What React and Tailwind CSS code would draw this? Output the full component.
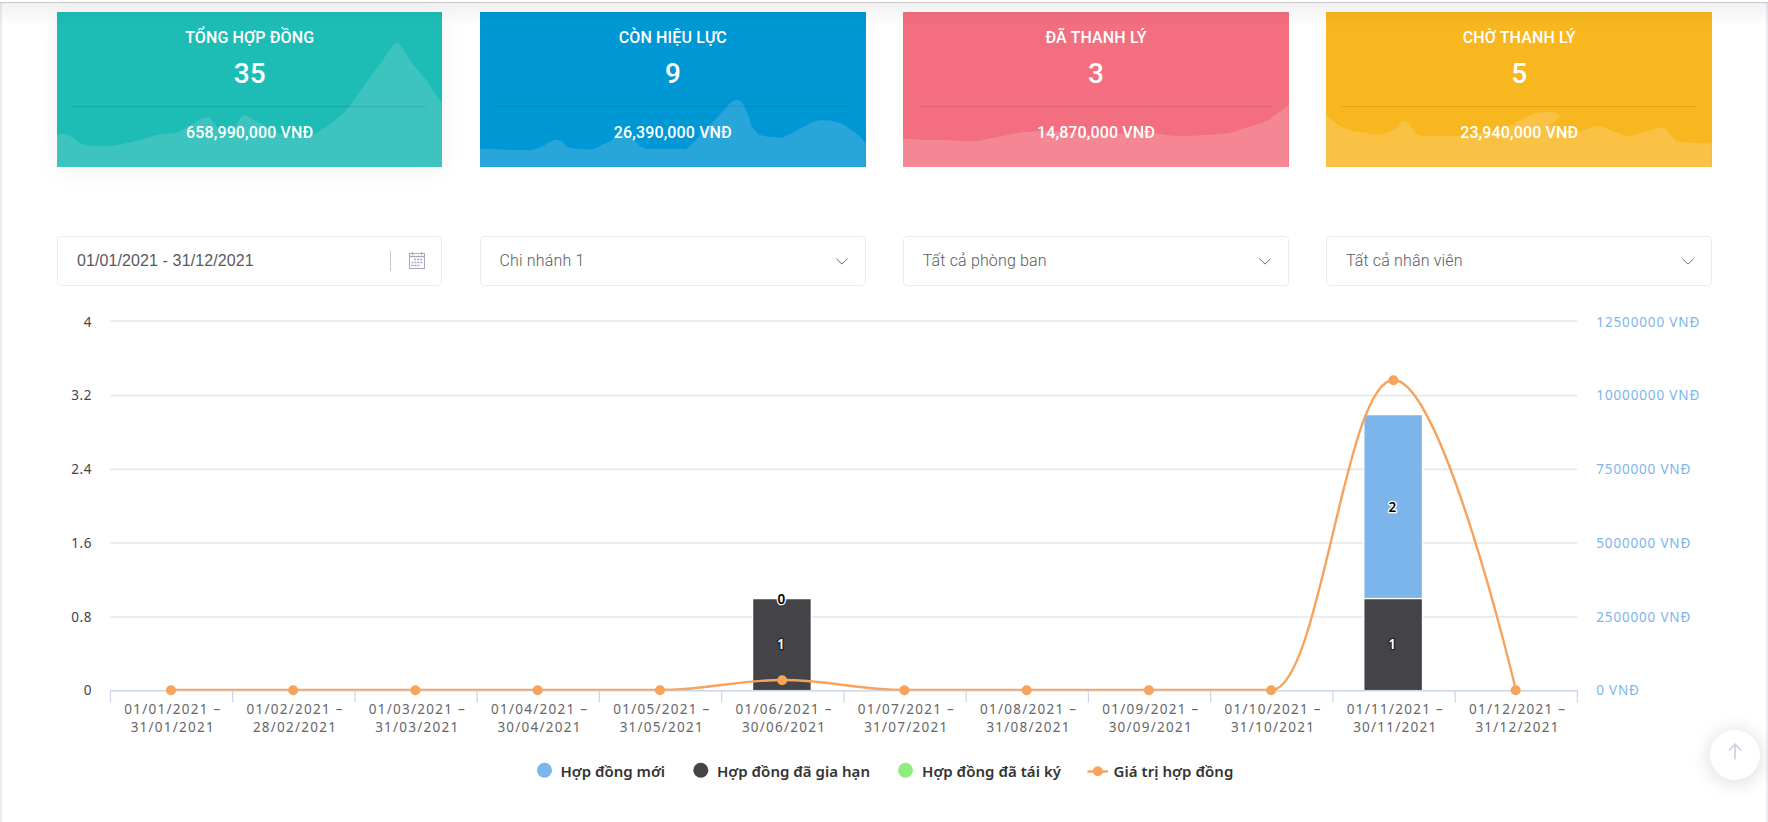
import React from 'react';

const cards = [
  {
    title: 'TỔNG HỢP ĐỒNG', count: '35', amount: '658,990,000 VNĐ', color: 'bg-[#1dbcb5] shadow-[0_4px_22px_rgba(0,0,0,0.06)]', wave: '#3dc4be',
    d: 'M0 369 C20 363 30 366 45 376 C60 388 68 396 85 398 C110 402 140 403 160 402 C210 396 250 384 295 370 C320 364 345 366 358 362 C385 350 400 340 420 328 C435 320 442 318 449 316 L458 316 L474 336 C490 360 510 365 528 350 L555 314 Q563 307 572 313 L625 342 C670 375 730 378 775 365 C800 353 850 316 878 285 L900 253 L1010 100 Q1020 86 1032 100 L1065 152 L1112 208 L1130 238 L1158 276 V465 H0 Z',
  },
  {
    title: 'CÒN HIỆU LỰC', count: '9', amount: '26,390,000 VNĐ', color: 'bg-[#0098d4]', wave: '#28a6da',
    d: 'M0 410 H30 L90 414 H150 C180 410 190 400 212 389 C220 384 225 383 235 385 C250 388 252 392 260 404 C275 408 290 411 305 412 H338 C350 408 360 400 375 395 L395 386 L412 363 C425 350 440 372 458 378 C475 396 480 406 500 410 H610 L615 414 L622 411 L690 340 L742 284 Q770 248 790 277 L810 320 L815 342 L835 365 C850 376 880 374 905 377 C940 366 975 340 1005 328 C1030 322 1050 326 1075 331 C1105 342 1120 360 1138 370 L1158 394 V465 H0 Z',
  },
  {
    title: 'ĐÃ THANH LÝ', count: '3', amount: '14,870,000 VNĐ', color: 'bg-[#f36e7f]', wave: '#f58794',
    d: 'M0 379 L50 383 L120 384 L180 387 Q225 390 250 382 L300 371 L360 360 L410 358 C460 358 480 358 510 362 L570 370 C650 364 700 364 755 364 L810 371 Q850 374 900 370 Q960 368 990 361 L1040 344 L1095 326 L1115 310 L1140 294 L1158 279 V465 H0 Z',
  },
  {
    title: 'CHỜ THANH LÝ', count: '5', amount: '23,940,000 VNĐ', color: 'bg-[#f8b71f]', wave: '#f9c244',
    d: 'M0 308 C20 326 45 347 75 356 C100 360 120 362 145 368 Q165 372 182 362 Q205 358 212 346 Q235 316 250 336 L265 360 Q272 370 290 371 H400 L460 364 L520 355 C555 340 580 325 610 310 C640 300 660 299 685 301 Q710 310 695 322 L675 336 Q670 346 690 353 L750 359 L780 354 Q825 330 845 352 C865 362 885 362 903 374 C930 370 970 355 1000 348 Q1015 343 1025 355 L1048 384 C1070 393 1110 393 1158 394 V465 H0 Z',
  },
];

const months = [
  ['01/01/2021', '31/01/2021'], ['01/02/2021', '28/02/2021'], ['01/03/2021', '31/03/2021'],
  ['01/04/2021', '30/04/2021'], ['01/05/2021', '31/05/2021'], ['01/06/2021', '30/06/2021'],
  ['01/07/2021', '31/07/2021'], ['01/08/2021', '31/08/2021'], ['01/09/2021', '30/09/2021'],
  ['01/10/2021', '31/10/2021'], ['01/11/2021', '30/11/2021'], ['01/12/2021', '31/12/2021'],
];

const LEFT = 110;
const STEP = 122.25;
const BASE = 390.5;
const center = (i) => LEFT + STEP * (i + 0.5);
const points = months.map((_, i) => [center(i), i === 5 ? 380 : i === 10 ? 80 : 390]);

/* Smooth curve through the points that never overshoots a neighbour. */
function spline(pts) {
  let out = `M${pts[0][0]} ${pts[0][1]}`;
  let prev = pts[0];
  for (let i = 1; i < pts.length; i++) {
    const [x, y] = pts[i];
    const last = pts[i - 1];
    const next = pts[i + 1];
    let left = [x, y];
    let right = [x, y];
    if (next) {
      left = [(1.5 * x + last[0]) / 2.5, (1.5 * y + last[1]) / 2.5];
      right = [(1.5 * x + next[0]) / 2.5, (1.5 * y + next[1]) / 2.5];
      const c = ((right[1] - left[1]) * (right[0] - x)) / (right[0] - left[0]) + y - right[1];
      left[1] += c;
      right[1] += c;
      const lo = Math.min(last[1], y), hi = Math.max(last[1], y);
      if (left[1] > hi || left[1] < lo) {
        left[1] = left[1] > hi ? hi : lo;
        right[1] = 2 * y - left[1];
      }
      const lo2 = Math.min(next[1], y), hi2 = Math.max(next[1], y);
      if (right[1] > hi2 || right[1] < lo2) {
        right[1] = right[1] > hi2 ? hi2 : lo2;
        left[1] = 2 * y - right[1];
      }
    }
    out += ` C${prev[0]} ${prev[1]} ${left[0]} ${left[1]} ${x} ${y}`;
    prev = right;
  }
  return out;
}

/* label, money label, grid line y, text baseline, money label width */
const yAxis = [
  ['4', '12500000 VNĐ', 21, 27, 103], ['3.2', '10000000 VNĐ', 95.5, 100, 103], ['2.4', '7500000 VNĐ', 169.3, 174, 94],
  ['1.6', '5000000 VNĐ', 243, 248, 94], ['0.8', '2500000 VNĐ', 317, 322, 94], ['0', '0 VNĐ', 390.5, 395, 42.5],
];

const legend = [
  ['Hợp đồng mới', 544.5, 561, 104.5, '#7cb5ec'],
  ['Hợp đồng đã gia hạn', 700.8, 717.5, 153, '#434348'],
  ['Hợp đồng đã tái ký', 905.5, 922.5, 139, '#90ed7d'],
];

function StatCard({ card }) {
  return (
    <div className={`relative h-[155px] ${card.color}`}>
      <svg className="absolute inset-0 h-full w-full" viewBox="0 0 1158 465" preserveAspectRatio="none">
        <path d={card.d} fill={card.wave} />
      </svg>
      <div className="relative flex h-full flex-col items-center px-4 pt-[14px] font-medium text-white">
        <div className="text-base leading-6 tracking-[0.13px]">{card.title}</div>
        <div className="mt-[6px] text-[28px] leading-9">{card.count}</div>
        <div className="mt-[14px] h-px w-full bg-black/10" />
        <div className="mt-[14px] text-base leading-6 tracking-[0.13px]">{card.amount}</div>
      </div>
    </div>
  );
}

function Select({ label }) {
  return (
    <div className="flex h-[50px] items-center justify-between rounded-[4px] border border-[#ebedf2] pl-[18.5px] pr-[17px] text-base font-light text-[#575962]">
      <span className="tracking-[0.16px]">{label}</span>
      <svg className="mt-px h-[7px] w-3" viewBox="0 0 12 7" fill="none" stroke="#6a6d78" strokeWidth="1">
        <path d="M0.4 0.7 L6 6.1 L11.6 0.7" />
      </svg>
    </div>
  );
}

function DateRange() {
  return (
    <div className="flex h-[50px] items-center rounded-[4px] border border-[#ebedf2] pl-[19px] pr-4 text-base text-[#575962]">
      <span className="flex-1 font-['Liberation_Sans',sans-serif] tracking-[0.11px]">01/01/2021 - 31/12/2021</span>
      <span className="h-5 w-px bg-[#c9c9c9]" />
      <svg className="mb-[2px] ml-[18px] h-[17px] w-4" viewBox="0 0 16 17" fill="none" stroke="#a9a5c3">
        <rect x="0.5" y="1.5" width="15" height="15" />
        <path d="M0.5 4.5 H15.5" strokeWidth="1.4" />
        <path d="M3.5 0 V3 M12.5 0 V3" />
        <path d="M5 7.5 H14 M2.5 10.5 H14 M2.5 13.5 H11" strokeWidth="1.7" strokeDasharray="2 1" />
      </svg>
    </div>
  );
}

function Chart() {
  return (
    <svg className="block h-[510px] w-full font-['Noto_Sans',sans-serif]" viewBox="0 0 1768 510">
      <defs>
        <clipPath id="plot"><rect x="110" y="0" width="1468" height="390.4" /></clipPath>
      </defs>
      {yAxis.slice(0, 5).map(([v, , y]) => (
        <path key={v} d={`M110.5 ${y} H1577`} stroke="#e6e6e6" strokeWidth="1.7" />
      ))}
      <g stroke="#fff" strokeWidth="1.3">
        <rect x="752.6" y="298.6" width="58.7" height="92" fill="#434348" />
        <rect x="1363.8" y="114.6" width="58.7" height="184" fill="#7cb5ec" />
        <rect x="1363.8" y="298.6" width="58.7" height="92" fill="#434348" />
      </g>
      <path d={`M110 ${BASE + 0.3} H1578`} stroke="#ccd6eb" strokeWidth="1.6" />
      {Array.from({ length: 13 }, (_, i) => (
        <path key={i} d={`M${LEFT + 0.4 + i * STEP} 390.5 V402.5`} stroke="#ccd6eb" strokeWidth="1.25" />
      ))}
      <path d={spline(points)} fill="none" stroke="#f7a35c" strokeWidth="2.4" clipPath="url(#plot)" />
      {points.map(([x, y], i) => (
        <circle key={i} cx={x - 0.2} cy={i === 10 || i === 5 ? y + 0.2 : 390.2} r="5" fill="#f7a35c" />
      ))}

      {yAxis.map(([v, money, , y, w]) => (
        <g key={v} fontSize="13.5">
          <text x="92" y={y} textAnchor="end" fill="#434348" letterSpacing="0.6">{v}</text>
          <text x="1596.3" y={y} fill="#7cb5ec" textLength={w}>{money}</text>
        </g>
      ))}
      {months.map(([a, b], i) => (
        <g key={a} fontSize="13.5" fill="#666">
          <text x={center(i) - 46.9} y="414" textLength="96">{a} –</text>
          <text x={center(i) - 40.5} y="432" textLength="83">{b}</text>
        </g>
      ))}
      <g fontSize="13.5" fontWeight="600" textAnchor="middle" strokeLinejoin="round" strokeWidth="2.6" style={{ paintOrder: 'stroke' }}>
        <text x="781.3" y="304" fill="#000" stroke="#fff">0</text>
        <text x="780.8" y="349" fill="#fff" stroke="#222">1</text>
        <text x="1392.3" y="212" fill="#000" stroke="#fff">2</text>
        <text x="1392" y="349" fill="#fff" stroke="#222">1</text>
      </g>

      <g fontSize="15" fontWeight="600" fill="#333">
        {legend.map(([label, cx, x, w, color]) => (
          <g key={label}>
            <circle cx={cx} cy="470.3" r="7.5" fill={color} />
            <text x={x - 0.5} y="477" textLength={w}>{label}</text>
          </g>
        ))}
        <path d="M1087.5 471.5 H1108" stroke="#f7a35c" strokeWidth="2.4" />
        <circle cx="1097.8" cy="471.3" r="5" fill="#f7a35c" />
        <text x="1113.5" y="477" textLength="119.8">Giá trị hợp đồng</text>
      </g>
    </svg>
  );
}

export default function App() {
  return (
    <div className="relative flex h-[822px] w-full flex-col overflow-hidden bg-white font-['Roboto',sans-serif]">
      <div className="h-[2px] shrink-0" />
      <div className="h-px shrink-0 bg-[#c8c8c8]" />
      <main className="h-[819px] border-x-2 border-[#ebedf2] pt-[9px]">
        <section className="grid grid-cols-4 gap-x-[37.6px] pl-[54.9px] pr-[54px]">
          {cards.map((card) => <StatCard key={card.title} card={card} />)}
        </section>
        <section className="mt-[69px] grid grid-cols-4 gap-x-[37.6px] pl-[54.9px] pr-[54px]">
          <DateRange />
          <Select label="Chi nhánh 1" />
          <Select label="Tất cả phòng ban" />
          <Select label="Tất cả nhân viên" />
        </section>
        <section className="-mx-[2px] mt-[14px]">
          <Chart />
        </section>
      </main>
      <div className="pointer-events-none absolute inset-x-0 top-[3px] h-6 bg-gradient-to-b from-black/[0.055] to-transparent" />
      <button className="absolute left-[1710px] top-[730px] flex h-[50px] w-[50px] justify-center rounded-full bg-white pt-[13px] shadow-[0_2px_16px_3px_rgba(69,65,78,0.15)]">
        <svg className="h-[17px] w-[14px]" viewBox="0 0 14 17" fill="none" stroke="#d3d2e2" strokeWidth="1.8">
          <path d="M7 16.5 V1.5 M1 7.3 L7 1.3 L13 7.3" />
        </svg>
      </button>
    </div>
  );
}
